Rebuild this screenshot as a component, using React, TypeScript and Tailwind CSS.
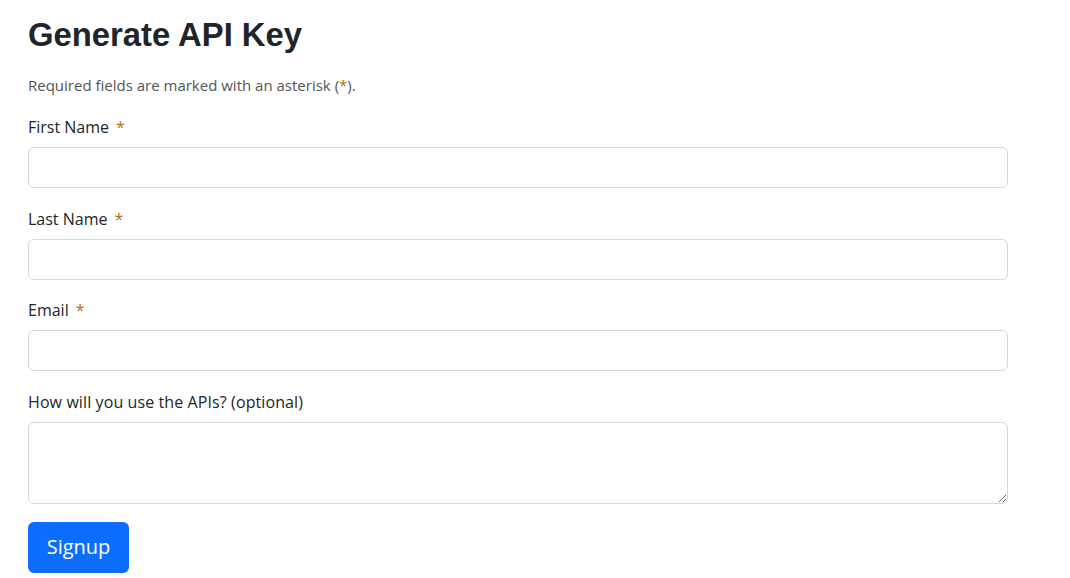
const fields = [
  { id: 'firstName', label: 'First Name', required: true },
  { id: 'lastName', label: 'Last Name', required: true },
  { id: 'email', label: 'Email', required: true },
]

const Star = () => <span className="text-[#b8700a] ml-[7px]">*</span>

export default function App() {
  return (
    <div className="min-h-screen bg-white px-[28px] pt-[14px] text-[#212529] font-['Open_Sans',sans-serif]">
      <h1 className="font-['Liberation_Sans',Arial,sans-serif] font-bold text-[32.8px] leading-[42px] text-[#212529]">
        Generate API Key
      </h1>
      <p className="mt-[17px] text-[15px] leading-6 text-[#555]">
        Required fields are marked with an asterisk (<span className="text-[#b8700a]">*</span>).
      </p>
      <form className="mt-[18px] w-[980px]" onSubmit={(e) => e.preventDefault()}>
        {fields.map((f) => (
          <div key={f.id} className="mb-[18.5px]">
            <label htmlFor={f.id} className="block mb-2 text-base leading-6">
              {f.label}
              {f.required && <Star />}
            </label>
            <input
              id={f.id}
              type={f.id === 'email' ? 'email' : 'text'}
              className="block w-full h-[41px] rounded-md border border-[#d5d8dc] px-3 text-base outline-none"
            />
          </div>
        ))}
        <div className="mb-[18px]">
          <label htmlFor="usage" className="block mb-2 text-base leading-6 tracking-[0.1px]">
            How will you use the APIs? (optional)
          </label>
          <textarea
            id="usage"
            className="block w-full h-[82px] rounded-md border border-[#d5d8dc] px-3 py-2 text-base outline-none"
          />
        </div>
        <button
          type="submit"
          className="h-[51px] w-[101px] rounded-md bg-[#0d6efd] text-white text-[20px]"
        >
          Signup
        </button>
      </form>
    </div>
  )
}
